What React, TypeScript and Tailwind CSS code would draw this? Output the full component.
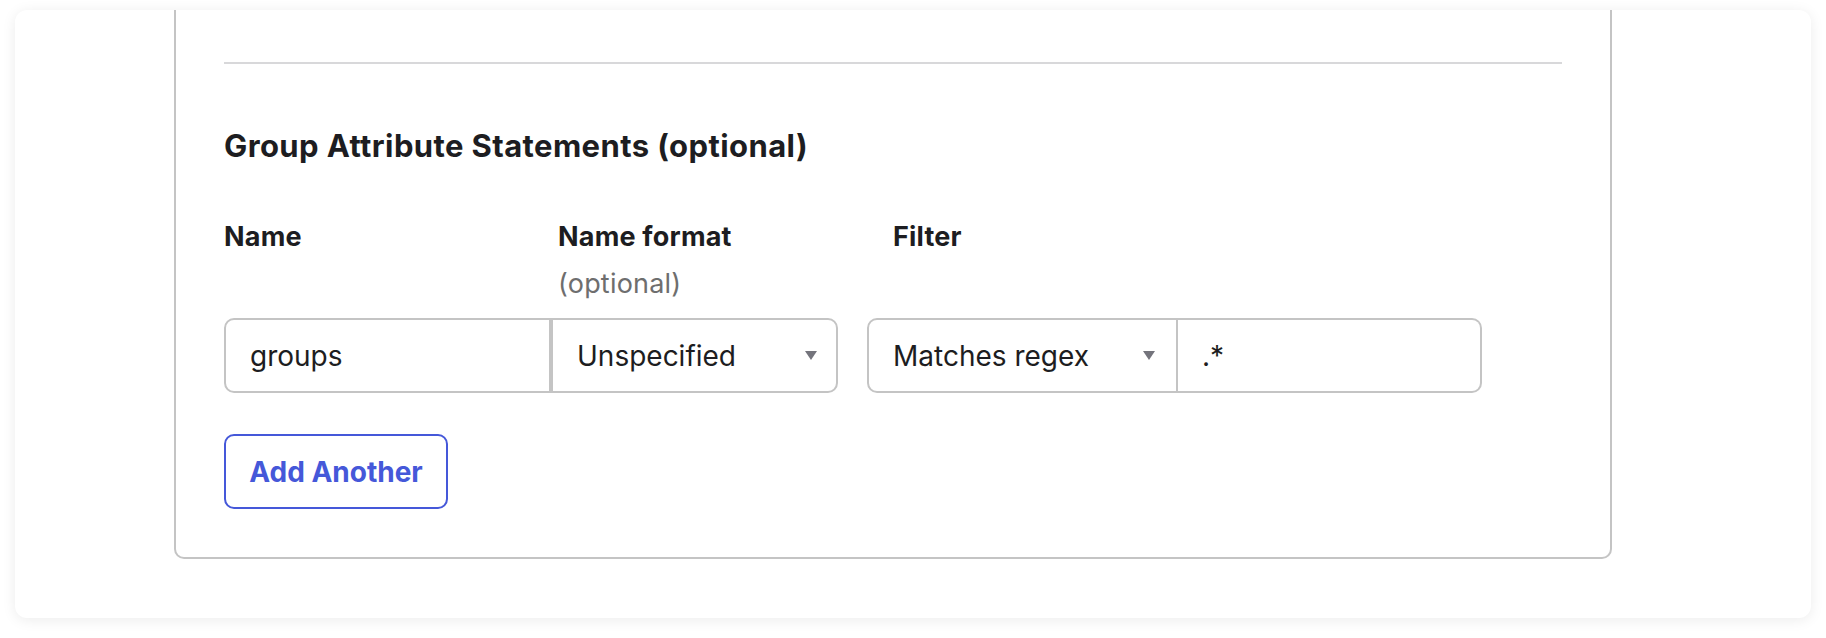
import React from "react";

function Caret() {
  return (
    <svg width="12" height="9" viewBox="0 0 12 9" className="shrink-0">
      <path d="M0 0 H12 L6 9 Z" fill="#74747c" />
    </svg>
  );
}

export default function App() {
  return (
    <div
      className="min-h-screen bg-white px-[15px] pt-[10px] text-[#1d1d21]"
      style={{ fontFamily: "Inter, 'Noto Sans', sans-serif" }}
    >
      <div className="h-[608px] overflow-hidden rounded-xl bg-white pl-[159px] pr-[199px] shadow-[0_2px_14px_rgba(0,0,0,0.08)]">
        <div className="h-[549px] rounded-b-[10px] border-2 border-t-0 border-[#c4c4c4] px-12 pt-[52px]">
          <div className="h-[2px] bg-[#d8d8da]" />

          <h2 className="mt-[64px] text-[31px] font-bold leading-[36px] tracking-[0.4px]">
            Group Attribute Statements (optional)
          </h2>

          <div className="mt-[49px] flex text-[27px] leading-[47px] tracking-[0.2px]">
            <div className="w-[334px] font-bold">Name</div>
            <div className="w-[335px]">
              <div className="font-bold">Name format</div>
              <div className="text-[#6e6e6e]">(optional)</div>
            </div>
            <div className="font-bold">Filter</div>
          </div>

          <div className="mt-[11px] flex h-[75px] text-[28px]">
            <div className="flex w-[327px] items-center rounded-l-[10px] border-2 border-[#c4c4c4] px-6">
              groups
            </div>
            <div className="flex w-[287px] items-center justify-between rounded-r-[10px] border-2 border-[#c4c4c4] pl-6 pr-[19px]">
              <span>Unspecified</span>
              <Caret />
            </div>
            <div className="ml-[29px] flex w-[311px] items-center justify-between rounded-l-[10px] border-2 border-[#c4c4c4] pl-6 pr-[21px]">
              <span>Matches regex</span>
              <Caret />
            </div>
            <div className="flex w-[304px] items-center rounded-r-[10px] border-2 border-l-0 border-[#c4c4c4] px-6">
              .*
            </div>
          </div>

          <button
            type="button"
            className="mt-[41px] flex h-[75px] w-[224px] items-center justify-center whitespace-nowrap rounded-[10px] border-2 border-[#4558d9] text-[28px] font-bold text-[#4558d9]"
          >
            Add Another
          </button>
        </div>
      </div>
    </div>
  );
}
